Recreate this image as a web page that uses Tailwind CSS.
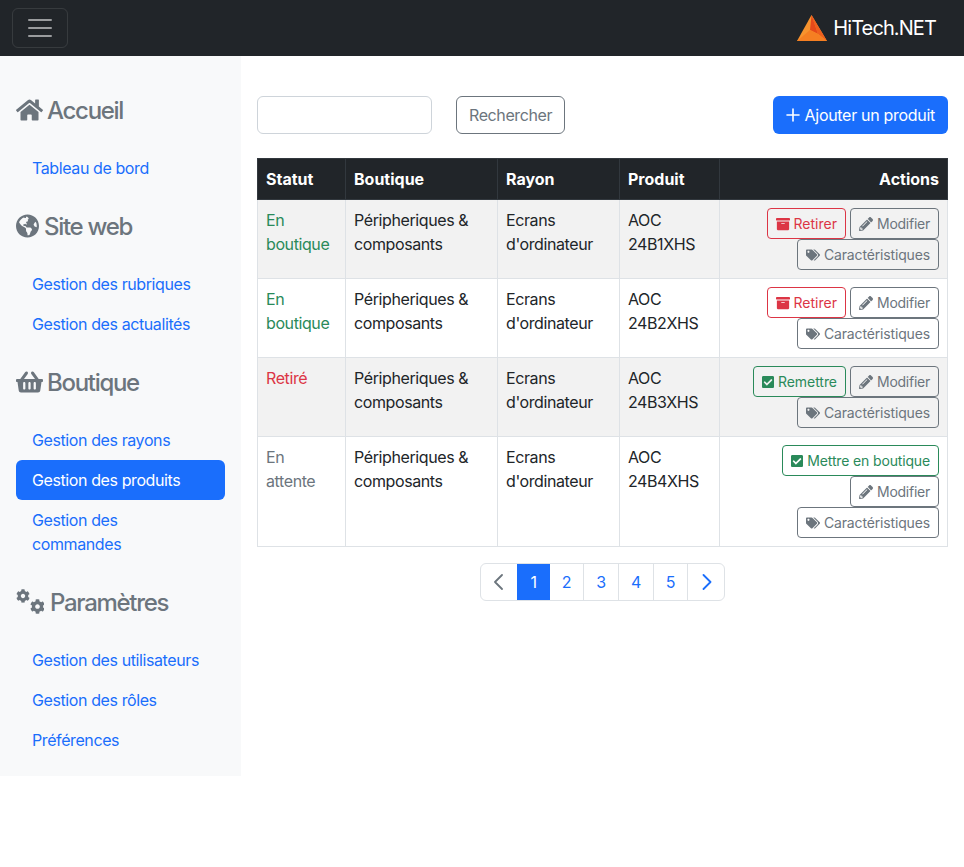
<!doctype html>
<html lang="fr">
<head>
<meta charset="utf-8">
<title>HiTech.NET</title>
<script src="https://cdn.jsdelivr.net/npm/@tailwindcss/browser@4"></script>
</head>
<body class="bg-white font-[Inter,sans-serif] text-[16px] leading-6 tracking-[-0.4px] text-[#212529]">
<svg class="hidden">
<defs>
<symbol id="archive" viewBox="0 0 512 512"><path fill="currentColor" d="M32 448c0 17.7 14.3 32 32 32h384c17.7 0 32-14.3 32-32V160H32v288zm160-212c0-6.6 5.4-12 12-12h104c6.6 0 12 5.4 12 12v8c0 6.6-5.4 12-12 12H204c-6.6 0-12-5.4-12-12v-8zM480 32H32C14.3 32 0 46.3 0 64v48c0 8.8 7.2 16 16 16h480c8.8 0 16-7.2 16-16V64c0-17.7-14.3-32-32-32z"/></symbol>
<symbol id="pencil" viewBox="0 0 512 512"><path fill="currentColor" d="M497.9 142.1l-46.1 46.1c-4.7 4.7-12.3 4.7-17 0l-111-111c-4.7-4.7-4.7-12.3 0-17l46.1-46.1c18.7-18.7 49.1-18.7 67.9 0l60.1 60.1c18.8 18.7 18.8 49.1 0 67.9zM284.2 99.8L21.6 362.4.4 483.9c-2.9 16.4 11.4 30.6 27.8 27.8l121.5-21.3 262.6-262.6c4.7-4.7 4.7-12.3 0-17l-111-111c-4.8-4.7-12.4-4.7-17.1 0zM124.1 339.9c-5.5-5.5-5.5-14.3 0-19.8l154-154c5.5-5.5 14.3-5.5 19.8 0s5.5 14.3 0 19.8l-154 154c-5.5 5.5-14.3 5.5-19.8 0zM88 424h48v36.3l-64.5 11.3-31.1-31.1L51.7 376H88v48z"/></symbol>
<symbol id="tags" viewBox="0 0 640 512"><path fill="currentColor" d="M497.941 225.941L286.059 14.059A48 48 0 0 0 252.118 0H48C21.49 0 0 21.49 0 48v204.118a48 48 0 0 0 14.059 33.941l211.882 211.882c18.744 18.745 49.136 18.746 67.882 0l204.118-204.118c18.745-18.745 18.745-49.137 0-67.882zM112 160c-26.51 0-48-21.49-48-48s21.49-48 48-48 48 21.49 48 48-21.49 48-48 48zm513.941 133.823L421.823 497.941c-18.745 18.745-49.137 18.745-67.882 0l-.36-.36L527.64 323.522c16.999-16.999 26.36-39.6 26.36-63.64s-9.362-46.641-26.36-63.64L331.397 0h48.721a48 48 0 0 1 33.941 14.059l211.882 211.882c18.745 18.745 18.745 49.137 0 67.882z"/></symbol>
<symbol id="check" viewBox="0 0 448 512"><path fill="currentColor" d="M400 480H48c-26.51 0-48-21.49-48-48V80c0-26.51 21.49-48 48-48h352c26.51 0 48 21.49 48 48v352c0 26.51-21.49 48-48 48zm-204.686-98.059l184-184c6.248-6.248 6.248-16.379 0-22.627l-22.627-22.627c-6.248-6.248-16.379-6.249-22.628 0L184 302.745l-69.059-69.059c-6.248-6.248-16.379-6.248-22.628 0L69.686 256.313c-6.248 6.248-6.248 16.379 0 22.627l104 104c6.249 6.25 16.379 6.25 22.628.001z"/></symbol>
<symbol id="cog" viewBox="0 0 512 512"><path fill="currentColor" d="M487.4 315.7l-42.6-24.6c4.3-23.2 4.3-47 0-70.2l42.6-24.6c4.9-2.8 7.1-8.6 5.5-14-11.1-35.6-30-67.8-54.7-94.6-3.8-4.1-10-5.1-14.8-2.3L380.8 110c-17.9-15.4-38.5-27.3-60.8-35.1V25.8c0-5.6-3.9-10.5-9.4-11.7-36.7-8.2-74.3-7.8-109.2 0-5.5 1.2-9.4 6.1-9.4 11.7V75c-22.2 7.9-42.8 19.8-60.8 35.1L88.7 85.5c-4.9-2.8-11-1.9-14.8 2.3-24.7 26.7-43.6 58.9-54.7 94.6-1.7 5.4.6 11.2 5.5 14L67.3 221c-4.3 23.2-4.3 47 0 70.2l-42.6 24.6c-4.9 2.8-7.1 8.6-5.5 14 11.1 35.6 30 67.8 54.7 94.6 3.8 4.1 10 5.1 14.8 2.3l42.6-24.6c17.9 15.4 38.5 27.3 60.8 35.1v49.2c0 5.6 3.9 10.5 9.4 11.7 36.7 8.2 74.3 7.8 109.2 0 5.5-1.2 9.4-6.1 9.4-11.7v-49.2c22.2-7.9 42.8-19.8 60.8-35.1l42.6 24.6c4.9 2.8 11 1.9 14.8-2.3 24.7-26.7 43.6-58.9 54.7-94.6 1.5-5.5-.7-11.3-5.6-14.1zM256 336c-44.1 0-80-35.9-80-80s35.9-80 80-80 80 35.9 80 80-35.9 80-80 80z"/></symbol>
</defs>
</svg>

<header class="h-14 bg-[#212529] flex items-center justify-between pl-3 pr-7">
  <button class="w-14 h-10 rounded-md border border-white/10 flex items-center justify-center" aria-label="Menu">
    <svg width="30" height="30" viewBox="0 0 30 30"><path stroke="#ffffff" stroke-opacity=".55" stroke-width="2" stroke-linecap="round" d="M4 7h22M4 15h22M4 23h22"/></svg>
  </button>
  <a class="flex items-center text-white text-[20px] leading-[30px] tracking-[-0.9px] gap-[6px]" href="#">
    <svg width="30" height="27" viewBox="0 0 30 27">
      <path fill="#f7932e" d="M14.5 0 L0 26 H30 Z"/>
      <path fill="#ee5f1e" d="M14.5 0 L30 26 L21 19 Z"/>
      <path fill="#e5491a" d="M14.5 0 L21 19 L13 15 Z"/>
      <path fill="#f57f22" d="M0 26 L13 15 L21 19 L30 26 Z"/>
    </svg>
    <span>HiTech.NET</span>
  </a>
</header>

<div class="flex items-start">
  <aside class="w-[241px] shrink-0 bg-[#f8f9fa] px-4 pt-4 pb-4">
    <h2 class="h-[76px] flex items-center gap-1 text-[24px] leading-[29px] tracking-[-1.3px] font-medium text-[#6c757d]">
      <svg class="w-[27px] h-6" viewBox="0 0 576 512"><path fill="currentColor" d="M280.37 148.26L96 300.11V464a16 16 0 0 0 16 16l112.06-.29a16 16 0 0 0 15.92-16V368a16 16 0 0 1 16-16h64a16 16 0 0 1 16 16v95.64a16 16 0 0 0 16 16.05L464 480a16 16 0 0 0 16-16V300L295.67 148.26a12.19 12.19 0 0 0-15.3 0zM571.6 251.47L488 182.56V44.05a12 12 0 0 0-12-12h-56a12 12 0 0 0-12 12v72.61L318.47 43a48 48 0 0 0-61 0L4.34 251.47a12 12 0 0 0-1.6 16.9l25.5 31A12 12 0 0 0 45.15 301l235.22-193.74a12.19 12.19 0 0 1 15.3 0L530.9 301a12 12 0 0 0 16.9-1.6l25.5-31a12 12 0 0 0-1.7-16.93z"/></svg>
      Accueil
    </h2>
    <nav class="flex flex-col text-[#1a6efc]">
      <a class="px-4 py-2 rounded-md" href="#">Tableau de bord</a>
    </nav>
    <h2 class="h-[76px] flex items-center gap-[5px] text-[24px] leading-[29px] tracking-[-1.3px] font-medium text-[#6c757d]">
      <svg class="w-[23px] h-6" viewBox="0 0 496 512"><path fill="currentColor" d="M248 8C111.03 8 0 119.03 0 256s111.03 248 248 248 248-111.03 248-248S384.97 8 248 8zm82.29 357.6c-3.9 3.88-7.99 7.95-11.31 11.28-2.99 3-5.1 6.7-6.17 10.71-1.51 5.66-2.73 11.38-4.77 16.87l-17.39 46.85c-13.76 3-28 4.69-42.65 4.69v-27.38c1.69-12.62-7.64-36.26-22.63-51.25-6-6-9.37-14.14-9.37-22.63v-32.01c0-11.64-6.27-22.34-16.46-27.97-14.37-7.95-34.81-19.06-48.81-26.11-11.48-5.78-22.1-13.14-31.65-21.75l-.8-.72a114.792 114.792 0 0 1-18.06-20.74c-9.38-13.77-24.66-36.42-34.59-51.14 20.47-45.5 57.36-82.04 103.2-101.89l24.01 12.01C203.48 89.74 216 82.01 216 70.11v-11.3c7.99-1.29 16.12-2.11 24.39-2.42l28.3 28.3c6.25 6.25 6.25 16.38 0 22.63L264 112l-10.34 10.34c-3.12 3.12-3.12 8.19 0 11.31l4.69 4.69c3.12 3.12 3.12 8.19 0 11.31l-8 8a8.008 8.008 0 0 1-5.66 2.34h-8.99c-2.08 0-4.08.81-5.58 2.27l-9.92 9.65a8.008 8.008 0 0 0-1.58 9.31l15.59 31.19c2.66 5.32-1.21 11.58-7.15 11.58h-5.64c-1.93 0-3.79-.7-5.24-1.96l-9.28-8.06a16.017 16.017 0 0 0-15.55-3.1l-31.17 10.39a11.95 11.95 0 0 0-8.17 11.34c0 4.53 2.56 8.66 6.61 10.69l11.08 5.54c9.41 4.71 19.79 7.16 30.31 7.16s22.59 27.29 32 32h66.75c8.49 0 16.62 3.37 22.63 9.37l13.69 13.69a30.503 30.503 0 0 1 8.93 21.57 46.536 46.536 0 0 1-13.72 32.98zM417 274.25c-5.79-1.45-10.84-5-14.15-9.97l-17.98-26.97a23.97 23.97 0 0 1 0-26.62l19.59-29.38c2.32-3.47 5.5-6.29 9.24-8.15l12.98-6.49C440.2 193.59 448 223.87 448 256c0 8.67-.74 17.16-1.82 25.54L417 274.25z"/></svg>
      Site web
    </h2>
    <nav class="flex flex-col text-[#1a6efc]">
      <a class="px-4 py-2 rounded-md" href="#">Gestion des rubriques</a>
      <a class="px-4 py-2 rounded-md" href="#">Gestion des actualités</a>
    </nav>
    <h2 class="h-[76px] flex items-center gap-1 text-[24px] leading-[29px] tracking-[-1.3px] font-medium text-[#6c757d]">
      <svg class="w-[27px] h-6" viewBox="0 0 576 512"><path fill="currentColor" d="M576 216v16c0 13.255-10.745 24-24 24h-8l-26.113 182.788C514.509 462.435 494.257 480 470.37 480H105.63c-23.887 0-44.139-17.565-47.518-41.212L32 256h-8c-13.255 0-24-10.745-24-24v-16c0-13.255 10.745-24 24-24h67.341l106.78-146.821c10.395-14.292 30.407-17.453 44.701-7.058 14.293 10.395 17.453 30.408 7.058 44.701L170.477 192h235.046L326.12 82.821c-10.395-14.292-7.234-34.306 7.059-44.701 14.291-10.395 34.306-7.235 44.701 7.058L484.659 192H552c13.255 0 24 10.745 24 24zM312 392V280c0-13.255-10.745-24-24-24s-24 10.745-24 24v112c0 13.255 10.745 24 24 24s24-10.745 24-24zm112 0V280c0-13.255-10.745-24-24-24s-24 10.745-24 24v112c0 13.255 10.745 24 24 24s24-10.745 24-24zm-224 0V280c0-13.255-10.745-24-24-24s-24 10.745-24 24v112c0 13.255 10.745 24 24 24s24-10.745 24-24z"/></svg>
      Boutique
    </h2>
    <nav class="flex flex-col text-[#1a6efc]">
      <a class="px-4 py-2 rounded-md" href="#">Gestion des rayons</a>
      <a class="px-4 py-2 rounded-md bg-[#1a6efc] text-white" href="#">Gestion des produits</a>
      <a class="px-4 py-2 rounded-md" href="#">Gestion des commandes</a>
    </nav>
    <h2 class="h-[76px] flex items-center gap-[6px] text-[24px] leading-[29px] tracking-[-1.3px] font-medium text-[#6c757d]">
      <svg class="w-7 h-[26px]" viewBox="0 0 28 26"><use href="#cog" x="0" y="0" width="14" height="14"/><use href="#cog" x="14" y="10" width="15" height="15"/></svg>
      Paramètres
    </h2>
    <nav class="flex flex-col text-[#1a6efc]">
      <a class="px-4 py-2 rounded-md" href="#">Gestion des utilisateurs</a>
      <a class="px-4 py-2 rounded-md" href="#">Gestion des rôles</a>
      <a class="px-4 py-2 rounded-md" href="#">Préférences</a>
    </nav>
  </aside>

  <main class="flex-1 min-w-0 px-4 pt-10">
    <div class="flex items-center mb-6">
      <input class="w-[175px] h-[38px] rounded-md border border-[#ced4da] bg-white" type="text" aria-label="Recherche">
      <button class="ml-6 h-[38px] px-3 rounded-md border border-[#6c757d] text-[#6c757d]">Rechercher</button>
      <button class="ml-auto h-[38px] pl-[13px] pr-[13px] rounded-md bg-[#1a6efc] text-white tracking-[-0.3px] flex items-center gap-[5px]">
        <svg class="w-3.5 h-3.5" viewBox="0 0 14 14"><path stroke="currentColor" stroke-width="1.6" stroke-linecap="round" d="M7 1v12M1 7h12"/></svg>
        Ajouter un produit
      </button>
    </div>

    <table class="w-[690px] table-fixed border-collapse">
      <colgroup><col class="w-[88px]"><col class="w-[152px]"><col class="w-[122px]"><col class="w-[100px]"><col class="w-[228px]"></colgroup>
      <thead class="bg-[#212529] text-white tracking-normal">
        <tr class="h-[41px]">
          <th class="p-2 text-left font-bold border border-[#32383e]">Statut</th>
          <th class="p-2 text-left font-bold border border-[#32383e]">Boutique</th>
          <th class="p-2 text-left font-bold border border-[#32383e]">Rayon</th>
          <th class="p-2 text-left font-bold border border-[#32383e]">Produit</th>
          <th class="p-2 text-right font-bold border border-[#32383e]">Actions</th>
        </tr>
      </thead>
      <tbody>
        <tr class="bg-[#f2f2f2]">
          <td class="p-2 align-top border border-[#dee2e6] text-[#2a8a5a]">En boutique</td>
          <td class="p-2 align-top border border-[#dee2e6]">Péripheriques &amp; composants</td>
          <td class="p-2 align-top border border-[#dee2e6]">Ecrans d'ordinateur</td>
          <td class="p-2 align-top border border-[#dee2e6]">AOC 24B1XHS</td>
          <td class="p-2 align-top border border-[#dee2e6]">
            <div class="flex flex-wrap justify-end gap-x-1">
              <a class="h-[31px] px-2 rounded border border-[#dc3545] text-[#dc3545] text-[14px] leading-[21px] tracking-normal flex items-center gap-1" href="#"><svg class="w-3.5 h-3.5"><use href="#archive"/></svg>Retirer</a>
              <a class="h-[31px] px-2 rounded border border-[#6c757d] text-[#6c757d] text-[14px] leading-[21px] tracking-[-0.25px] flex items-center gap-1" href="#"><svg class="w-3.5 h-3.5"><use href="#pencil"/></svg>Modifier</a>
              <a class="h-[31px] px-2 rounded border border-[#6c757d] text-[#6c757d] text-[14px] leading-[21px] tracking-[-0.15px] flex items-center gap-1" href="#"><svg class="w-3.5 h-3.5"><use href="#tags"/></svg>Caractéristiques</a>
            </div>
          </td>
        </tr>
        <tr>
          <td class="p-2 align-top border border-[#dee2e6] text-[#2a8a5a]">En boutique</td>
          <td class="p-2 align-top border border-[#dee2e6]">Péripheriques &amp; composants</td>
          <td class="p-2 align-top border border-[#dee2e6]">Ecrans d'ordinateur</td>
          <td class="p-2 align-top border border-[#dee2e6]">AOC 24B2XHS</td>
          <td class="p-2 align-top border border-[#dee2e6]">
            <div class="flex flex-wrap justify-end gap-x-1">
              <a class="h-[31px] px-2 rounded border border-[#dc3545] text-[#dc3545] text-[14px] leading-[21px] tracking-normal flex items-center gap-1" href="#"><svg class="w-3.5 h-3.5"><use href="#archive"/></svg>Retirer</a>
              <a class="h-[31px] px-2 rounded border border-[#6c757d] text-[#6c757d] text-[14px] leading-[21px] tracking-[-0.25px] flex items-center gap-1" href="#"><svg class="w-3.5 h-3.5"><use href="#pencil"/></svg>Modifier</a>
              <a class="h-[31px] px-2 rounded border border-[#6c757d] text-[#6c757d] text-[14px] leading-[21px] tracking-[-0.15px] flex items-center gap-1" href="#"><svg class="w-3.5 h-3.5"><use href="#tags"/></svg>Caractéristiques</a>
            </div>
          </td>
        </tr>
        <tr class="bg-[#f2f2f2]">
          <td class="p-2 align-top border border-[#dee2e6] text-[#dc3545]">Retiré</td>
          <td class="p-2 align-top border border-[#dee2e6]">Péripheriques &amp; composants</td>
          <td class="p-2 align-top border border-[#dee2e6]">Ecrans d'ordinateur</td>
          <td class="p-2 align-top border border-[#dee2e6]">AOC 24B3XHS</td>
          <td class="p-2 align-top border border-[#dee2e6]">
            <div class="flex flex-wrap justify-end gap-x-1">
              <a class="h-[31px] px-2 rounded border border-[#2a8a5a] text-[#2a8a5a] text-[14px] leading-[21px] tracking-[-0.05px] flex items-center gap-1" href="#"><svg class="w-3 h-3.5"><use href="#check"/></svg>Remettre</a>
              <a class="h-[31px] px-2 rounded border border-[#6c757d] text-[#6c757d] text-[14px] leading-[21px] tracking-[-0.25px] flex items-center gap-1" href="#"><svg class="w-3.5 h-3.5"><use href="#pencil"/></svg>Modifier</a>
              <a class="h-[31px] px-2 rounded border border-[#6c757d] text-[#6c757d] text-[14px] leading-[21px] tracking-[-0.15px] flex items-center gap-1" href="#"><svg class="w-3.5 h-3.5"><use href="#tags"/></svg>Caractéristiques</a>
            </div>
          </td>
        </tr>
        <tr>
          <td class="p-2 align-top border border-[#dee2e6] text-[#6c757d]">En attente</td>
          <td class="p-2 align-top border border-[#dee2e6]">Péripheriques &amp; composants</td>
          <td class="p-2 align-top border border-[#dee2e6]">Ecrans d'ordinateur</td>
          <td class="p-2 align-top border border-[#dee2e6]">AOC 24B4XHS</td>
          <td class="p-2 align-top border border-[#dee2e6]">
            <div class="flex flex-wrap justify-end gap-x-1">
              <a class="h-[31px] px-2 rounded border border-[#2a8a5a] text-[#2a8a5a] text-[14px] leading-[21px] tracking-[-0.15px] flex items-center gap-1" href="#"><svg class="w-3 h-3.5"><use href="#check"/></svg>Mettre en boutique</a>
              <a class="h-[31px] px-2 rounded border border-[#6c757d] text-[#6c757d] text-[14px] leading-[21px] tracking-[-0.25px] flex items-center gap-1" href="#"><svg class="w-3.5 h-3.5"><use href="#pencil"/></svg>Modifier</a>
              <a class="h-[31px] px-2 rounded border border-[#6c757d] text-[#6c757d] text-[14px] leading-[21px] tracking-[-0.15px] flex items-center gap-1" href="#"><svg class="w-3.5 h-3.5"><use href="#tags"/></svg>Caractéristiques</a>
            </div>
          </td>
        </tr>
      </tbody>
    </table>

    <nav class="mt-4 flex justify-center">
      <div class="flex h-[38px] border border-[#dee2e6] rounded-md text-[#1a6efc] overflow-hidden">
        <a class="w-[36px] flex items-center justify-center text-[#6c757d]" href="#" aria-label="Précédent"><svg class="w-4 h-4" viewBox="0 0 16 16"><path fill="none" stroke="currentColor" stroke-width="1.8" stroke-linecap="round" stroke-linejoin="round" d="M11 1 4 8l7 7"/></svg></a>
        <a class="w-[33px] flex items-center justify-center bg-[#1a6efc] text-white" href="#">1</a>
        <a class="w-[33px] flex items-center justify-center" href="#">2</a>
        <a class="w-[35px] flex items-center justify-center border-l border-[#dee2e6]" href="#">3</a>
        <a class="w-[35px] flex items-center justify-center border-l border-[#dee2e6]" href="#">4</a>
        <a class="w-[34px] flex items-center justify-center border-l border-[#dee2e6]" href="#">5</a>
        <a class="w-[37px] flex items-center justify-center border-l border-[#dee2e6]" href="#" aria-label="Suivant"><svg class="w-4 h-4" viewBox="0 0 16 16"><path fill="none" stroke="currentColor" stroke-width="1.8" stroke-linecap="round" stroke-linejoin="round" d="m5.5 1 7 7-7 7"/></svg></a>
      </div>
    </nav>
  </main>
</div>
</body>
</html>
